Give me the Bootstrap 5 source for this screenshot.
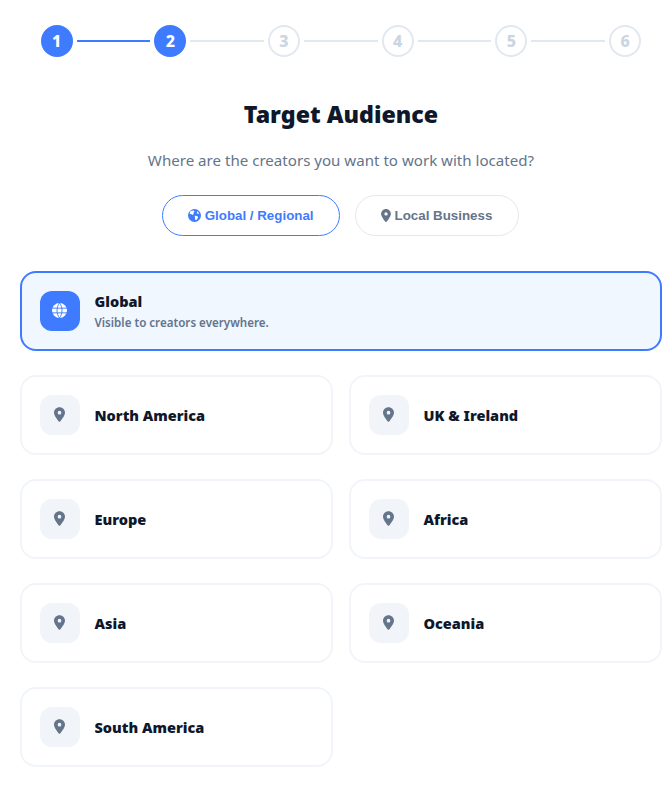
<!DOCTYPE html>
<html lang="en">
<head>
<meta charset="utf-8">
<title>Target Audience</title>
<link rel="stylesheet" href="https://cdn.jsdelivr.net/npm/bootstrap@5.3.0/dist/css/bootstrap.min.css">
<style>
body{font-family:"Noto Sans",sans-serif;background:#fff;color:#0f172a}
.wrap-page{padding:25px 10px 0 20px;width:672px}
.stepper{padding:0 21px 0 20.6px;height:32px;margin-bottom:42px}
.step-dot{width:32px;height:32px;flex:none;border-radius:50%;border:2px solid #e2e8f0;color:#cbd5e1;font-size:16px;font-weight:800;background:#fff}
.step-dot.on{background:#3f7bfe;border-color:#3f7bfe;color:#fff}
.step-line{height:2px;flex:1;margin:0 4px;background:#e2e8f0}
.step-line.on{background:#3f7bfe}
.page-title{font-size:23.2px;font-weight:900;line-height:30px;color:#0f172a;margin-bottom:20px}
.page-sub{font-size:15.1px;line-height:22px;color:#64748b;margin-bottom:24px}
.type-btn{font-family:"Liberation Sans",Arial,sans-serif;font-size:13.33px;font-weight:700;height:41px;border-radius:21px;border:1px solid #e2e8f0;background:#fff;color:#64748b;padding:0 25px;gap:4px}
.type-btn:last-child{padding-right:26px}
.type-btn.on{border-color:#3f7bfe;color:#3f7bfe}
.type-btn svg{flex:none}
.type-row{gap:15px;margin-bottom:35px;padding-right:1px}
.region-grid{display:grid;grid-template-columns:1fr 1fr;gap:24px 16px}
.region-card{height:80px;border:2px solid #f1f5f9;border-radius:16px;padding:0 18px;gap:14.5px;background:#fff}
.region-card.on{grid-column:1/3;border-color:#3f7bfe;background:#f0f7ff}
.icon-box{width:40px;height:40px;flex:none;border-radius:12px;background:#f1f5f9;color:#64748b;padding:0 2px 2px 0}
.on .icon-box{background:#3f7bfe;color:#fff;padding:0 1px 1px 0}
.region-name{font-size:14.5px;font-weight:900;line-height:20px;color:#0f172a}
.region-desc{font-size:11.6px;font-weight:600;line-height:16px;color:#64748b;margin-top:4px}
</style>
</head>
<body>
<svg width="0" height="0" class="position-absolute">
<defs>
<symbol id="pin" viewBox="0 0 384 512"><path fill="currentColor" d="M215.700 499.200C267 435 384 279.400 384 192C384 86 298 0 192 0S0 86 0 192c0 87.400 117 243 168.300 307.200c12.300 15.300 35.100 15.300 47.400 0zM192 128a64 64 0 1 1 0 128 64 64 0 1 1 0-128z"/></symbol>
<symbol id="earth" viewBox="0 0 16 16"><circle cx="8" cy="8" r="8" fill="currentColor"/><path fill="#fff" d="M3 2.600 6.800 1.700 8.200 3.300 6.600 4.500 7 6 5.300 7.300 3.900 6 2 6.200ZM8.300 8.200 11.400 8.700 12.400 10.400 10.500 13.600 9 13.500 8.600 11ZM11.200 2.800 13.900 5.300 12.300 6.300 10.800 5Z"/></symbol>
</defs>
</svg>
<main class="wrap-page">
  <div class="stepper d-flex align-items-center">
    <div class="step-dot on d-flex align-items-center justify-content-center">1</div><div class="step-line on"></div>
    <div class="step-dot on d-flex align-items-center justify-content-center">2</div><div class="step-line"></div>
    <div class="step-dot d-flex align-items-center justify-content-center">3</div><div class="step-line"></div>
    <div class="step-dot d-flex align-items-center justify-content-center">4</div><div class="step-line"></div>
    <div class="step-dot d-flex align-items-center justify-content-center">5</div><div class="step-line"></div>
    <div class="step-dot d-flex align-items-center justify-content-center">6</div>
  </div>
  <h1 class="page-title text-center">Target Audience</h1>
  <p class="page-sub text-center">Where are the creators you want to work with located?</p>
  <div class="type-row d-flex justify-content-center">
    <button type="button" class="type-btn on d-flex align-items-center"><svg width="13" height="13"><use href="#earth"/></svg>Global / Regional</button>
    <button type="button" class="type-btn d-flex align-items-center"><svg width="10" height="13"><use href="#pin"/></svg>Local Business</button>
  </div>
  <div class="region-grid">
    <div class="region-card on d-flex align-items-center">
      <div class="icon-box d-flex align-items-center justify-content-center">
        <svg width="15" height="15" viewBox="0 0 16 16"><circle cx="8" cy="8" r="8" fill="currentColor"/><path fill="none" stroke="#3f7bfe" stroke-width="1" d="M0 5.500H16M0 10.500H16M8 0C4.500 4 4.500 12 8 16M8 0C11.500 4 11.500 12 8 16"/></svg>
      </div>
      <div><div class="region-name">Global</div><div class="region-desc">Visible to creators everywhere.</div></div>
    </div>
    <div class="region-card d-flex align-items-center"><div class="icon-box d-flex align-items-center justify-content-center"><svg width="11" height="15"><use href="#pin"/></svg></div><div class="region-name">North America</div></div>
    <div class="region-card d-flex align-items-center"><div class="icon-box d-flex align-items-center justify-content-center"><svg width="11" height="15"><use href="#pin"/></svg></div><div class="region-name">UK &amp; Ireland</div></div>
    <div class="region-card d-flex align-items-center"><div class="icon-box d-flex align-items-center justify-content-center"><svg width="11" height="15"><use href="#pin"/></svg></div><div class="region-name">Europe</div></div>
    <div class="region-card d-flex align-items-center"><div class="icon-box d-flex align-items-center justify-content-center"><svg width="11" height="15"><use href="#pin"/></svg></div><div class="region-name">Africa</div></div>
    <div class="region-card d-flex align-items-center"><div class="icon-box d-flex align-items-center justify-content-center"><svg width="11" height="15"><use href="#pin"/></svg></div><div class="region-name">Asia</div></div>
    <div class="region-card d-flex align-items-center"><div class="icon-box d-flex align-items-center justify-content-center"><svg width="11" height="15"><use href="#pin"/></svg></div><div class="region-name">Oceania</div></div>
    <div class="region-card d-flex align-items-center"><div class="icon-box d-flex align-items-center justify-content-center"><svg width="11" height="15"><use href="#pin"/></svg></div><div class="region-name">South America</div></div>
  </div>
</main>
<script src="https://cdn.jsdelivr.net/npm/bootstrap@5.3.0/dist/js/bootstrap.bundle.min.js"></script>
</body>
</html>
